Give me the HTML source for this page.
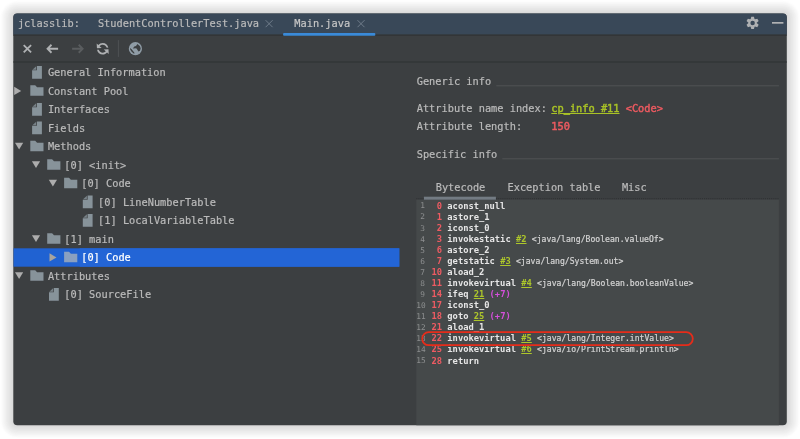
<!DOCTYPE html>
<html><head><meta charset="utf-8"><title>jclasslib</title>
<style>
html,body{margin:0;padding:0;background:#fff;}
body{width:800px;height:439px;position:relative;overflow:hidden;font-family:"DejaVu Sans Mono","Liberation Mono",monospace;font-size:10.3px;color:#bbbbbb;-webkit-text-stroke:0.2px currentColor;}
#layer{will-change:transform;position:absolute;left:0;top:0;width:800px;height:439px;overflow:hidden;}
svg{position:absolute;left:0;top:0;}
.t{position:absolute;white-space:pre;line-height:21.6px;height:21.6px;top:12.7px;}
.row{position:absolute;height:18.5px;line-height:18.5px;white-space:pre;}
.sel{color:#fff;}
.lab{position:absolute;white-space:pre;line-height:14px;height:14px;}
.ln{position:absolute;left:416.3px;width:8.6px;text-align:right;font-size:7.8px;line-height:11px;height:11px;color:#8c8e8f;-webkit-text-stroke:0;}
.cl{position:absolute;left:431.5px;white-space:pre;font-size:8.77px;line-height:11px;height:11px;color:#d6d6d6;-webkit-text-stroke:0;}
.cl b{font-weight:bold;color:#e6e6e6;}
.o{color:#ee5b62;font-weight:bold;}
.l{color:#adc62b;font-weight:bold;text-decoration:underline;}
.d{color:#d4d4d4;font-size:8.12px;-webkit-text-stroke:0.2px #d4d4d4;}
.m{color:#d64fdc;font-weight:bold;}
</style></head><body>
<div id="layer">
<svg width="800" height="439" viewBox="0 0 800 439">
 <defs><clipPath id="wc"><rect x="13.3" y="13.4" width="773.5" height="411.9" rx="4" ry="4"/></clipPath></defs>
 <rect x="-0.7" y="-0.6" width="801.5" height="439.9" rx="18" ry="18" fill="rgb(255,255,255)"/>
<rect x="0.3" y="0.4" width="799.5" height="437.9" rx="17" ry="17" fill="rgb(254,254,254)"/>
<rect x="1.3" y="1.4" width="797.5" height="435.9" rx="16" ry="16" fill="rgb(251,251,251)"/>
<rect x="2.3" y="2.4" width="795.5" height="433.9" rx="15" ry="15" fill="rgb(248,248,248)"/>
<rect x="3.3" y="3.4" width="793.5" height="431.9" rx="14" ry="14" fill="rgb(245,245,245)"/>
<rect x="4.3" y="4.4" width="791.5" height="429.9" rx="13" ry="13" fill="rgb(242,242,242)"/>
<rect x="5.3" y="5.4" width="789.5" height="427.9" rx="12" ry="12" fill="rgb(239,239,239)"/>
<rect x="6.3" y="6.4" width="787.5" height="425.9" rx="11" ry="11" fill="rgb(236,236,236)"/>
<rect x="7.3" y="7.4" width="785.5" height="423.9" rx="10" ry="10" fill="rgb(233,233,233)"/>
<rect x="8.3" y="8.4" width="783.5" height="421.9" rx="9" ry="9" fill="rgb(230,230,230)"/>
<rect x="9.3" y="9.4" width="781.5" height="419.9" rx="8" ry="8" fill="rgb(227,227,227)"/>
<rect x="10.3" y="10.4" width="779.5" height="417.9" rx="7" ry="7" fill="rgb(224,224,224)"/>
<rect x="11.3" y="11.4" width="777.5" height="415.9" rx="6" ry="6" fill="rgb(221,221,221)"/>
<rect x="12.3" y="12.4" width="775.5" height="413.9" rx="5" ry="5" fill="rgb(218,218,218)"/>
 <g clip-path="url(#wc)">
 <rect x="0" y="0" width="800" height="439" fill="#3c3f41"/>
 <rect x="0" y="0" width="800" height="34.6" fill="#394858"/>
 <rect x="0" y="34.6" width="800" height="1.1" fill="#2f3234"/>
 <rect x="0" y="61.4" width="800" height="1.2" fill="#313436"/>
 <rect x="283.1" y="33.1" width="92.2" height="2.6" rx="0.8" fill="#3a8ad8"/>
 
 <rect x="416.3" y="199.6" width="362.6" height="240" fill="#45494a"/>
 <path d="M416.3,198.7 H778.9" stroke="#2e3032" stroke-width="1" stroke-dasharray="1.05 1.05" fill="none"/>
 <rect x="423.9" y="196.7" width="72" height="3" fill="#737b83"/>
 <rect x="496.3" y="85.3" width="282.6" height="1" fill="#505355"/>
 <rect x="502.3" y="158.3" width="276.6" height="1" fill="#505355"/>
 <rect x="13.3" y="248.3" width="386" height="18.4" fill="#2062d2"/>
<rect x="79.7" y="248.3" width="319.6" height="18.4" fill="#2365d6"/>
 </g>
</svg>
<div class="t" style="left:17.9px">jclasslib:</div>
<div class="t" style="left:97.9px">StudentControllerTest.java</div>
<div class="t" style="left:294.3px;color:#c6c6c6">Main.java</div>
<div class="row" style="top:63.2px;left:47.9px">General Information</div>
<div class="row" style="top:81.7px;left:47.9px">Constant Pool</div>
<div class="row" style="top:100.2px;left:47.9px">Interfaces</div>
<div class="row" style="top:118.7px;left:47.9px">Fields</div>
<div class="row" style="top:137.2px;left:47.9px">Methods</div>
<div class="row" style="top:155.7px;left:64.3px">[0] &lt;init&gt;</div>
<div class="row" style="top:174.2px;left:81.2px">[0] Code</div>
<div class="row" style="top:192.7px;left:98.1px">[0] LineNumberTable</div>
<div class="row" style="top:211.2px;left:98.1px">[1] LocalVariableTable</div>
<div class="row" style="top:229.7px;left:64.3px">[1] main</div>
<div class="row sel" style="top:248.2px;left:81.2px">[0] Code</div>
<div class="row" style="top:266.7px;left:47.9px">Attributes</div>
<div class="row" style="top:285.2px;left:64.3px">[0] SourceFile</div>
<div class="lab" style="left:416.7px;top:74px">Generic info</div>
<div class="lab" style="left:416.7px;top:100.5px">Attribute name index:</div>
<div class="lab" style="left:551.3px;top:100.5px"><span style="color:#a9c226;text-decoration:underline;-webkit-text-stroke:0.45px #a9c226">cp_info #11</span> <span style="color:#ec5a60;-webkit-text-stroke:0.45px #ec5a60">&lt;Code&gt;</span></div>
<div class="lab" style="left:416.7px;top:119px">Attribute length:</div>
<div class="lab" style="left:551.3px;top:119px;color:#ec5a60;-webkit-text-stroke:0.5px #ec5a60">150</div>
<div class="lab" style="left:416.7px;top:147px">Specific info</div>
<div class="lab" style="left:435.7px;top:179.8px">Bytecode</div>
<div class="lab" style="left:507.5px;top:179.8px">Exception table</div>
<div class="lab" style="left:621.9px;top:179.8px">Misc</div>
<div class="ln" style="top:200.4px">1</div><div class="cl" style="top:200.8px"><span class="o"> 0</span> <b>aconst_null</b></div>
<div class="ln" style="top:211.45px">2</div><div class="cl" style="top:211.85px"><span class="o"> 1</span> <b>astore_1</b></div>
<div class="ln" style="top:222.5px">3</div><div class="cl" style="top:222.9px"><span class="o"> 2</span> <b>iconst_0</b></div>
<div class="ln" style="top:233.55px">4</div><div class="cl" style="top:233.95px"><span class="o"> 3</span> <b>invokestatic</b> <span class="l">#2</span> <span class="d">&lt;java/lang/Boolean.valueOf&gt;</span></div>
<div class="ln" style="top:244.6px">5</div><div class="cl" style="top:245px"><span class="o"> 6</span> <b>astore_2</b></div>
<div class="ln" style="top:255.65px">6</div><div class="cl" style="top:256.05px"><span class="o"> 7</span> <b>getstatic</b> <span class="l">#3</span> <span class="d">&lt;java/lang/System.out&gt;</span></div>
<div class="ln" style="top:266.7px">7</div><div class="cl" style="top:267.1px"><span class="o">10</span> <b>aload_2</b></div>
<div class="ln" style="top:277.75px">8</div><div class="cl" style="top:278.15px"><span class="o">11</span> <b>invokevirtual</b> <span class="l">#4</span> <span class="d">&lt;java/lang/Boolean.booleanValue&gt;</span></div>
<div class="ln" style="top:288.8px">9</div><div class="cl" style="top:289.2px"><span class="o">14</span> <b>ifeq</b> <span class="l">21</span> <span class="m">(+7)</span></div>
<div class="ln" style="top:299.85px">10</div><div class="cl" style="top:300.25px"><span class="o">17</span> <b>iconst_0</b></div>
<div class="ln" style="top:310.9px">11</div><div class="cl" style="top:311.3px"><span class="o">18</span> <b>goto</b> <span class="l">25</span> <span class="m">(+7)</span></div>
<div class="ln" style="top:321.95px">12</div><div class="cl" style="top:322.35px"><span class="o">21</span> <b>aload_1</b></div>
<div class="ln" style="top:333px">13</div><div class="cl" style="top:333.4px"><span class="o">22</span> <b>invokevirtual</b> <span class="l">#5</span> <span class="d">&lt;java/lang/Integer.intValue&gt;</span></div>
<div class="ln" style="top:344.05px">14</div><div class="cl" style="top:344.45px"><span class="o">25</span> <b>invokevirtual</b> <span class="l">#6</span> <span class="d">&lt;java/io/PrintStream.println&gt;</span></div>
<div class="ln" style="top:355.1px">15</div><div class="cl" style="top:355.5px"><span class="o">28</span> <b>return</b></div>
<svg width="800" height="439" viewBox="0 0 800 439">
<g clip-path="url(#wc)">
<path d="M36.9,65.9 h5 v12.9 h-9.8 v-8.5 h4.8 z" fill="#87939a"/><path d="M36.2,66.2 v3.5 h-3.8 z" fill="#87939a" opacity=".8"/>
<path d="M14.2,86.85 v8.2 l7,-4.1 z" fill="#adadad"/>
<path d="M30.3,85.25 h4.9 l1.9,2 h6.4 v8.6 h-13.2 z" fill="#87939a"/>
<path d="M36.9,102.9 h5 v12.9 h-9.8 v-8.5 h4.8 z" fill="#87939a"/><path d="M36.2,103.2 v3.5 h-3.8 z" fill="#87939a" opacity=".8"/>
<path d="M36.9,121.4 h5 v12.9 h-9.8 v-8.5 h4.8 z" fill="#87939a"/><path d="M36.2,121.7 v3.5 h-3.8 z" fill="#87939a" opacity=".8"/>
<path d="M15,142.85 h8.2 l-4.1,6.7 z" fill="#adadad"/>
<path d="M30.3,140.75 h4.9 l1.9,2 h6.4 v8.6 h-13.2 z" fill="#87939a"/>
<path d="M31.9,161.35 h8.2 l-4.1,6.7 z" fill="#adadad"/>
<path d="M47.2,159.25 h4.9 l1.9,2 h6.4 v8.6 h-13.2 z" fill="#87939a"/>
<path d="M48.8,179.85 h8.2 l-4.1,6.7 z" fill="#adadad"/>
<path d="M64.1,177.75 h4.9 l1.9,2 h6.4 v8.6 h-13.2 z" fill="#87939a"/>
<path d="M87.6,195.4 h5 v12.9 h-9.8 v-8.5 h4.8 z" fill="#87939a"/><path d="M86.9,195.7 v3.5 h-3.8 z" fill="#87939a" opacity=".8"/>
<path d="M87.6,213.9 h5 v12.9 h-9.8 v-8.5 h4.8 z" fill="#87939a"/><path d="M86.9,214.2 v3.5 h-3.8 z" fill="#87939a" opacity=".8"/>
<path d="M31.9,235.35 h8.2 l-4.1,6.7 z" fill="#adadad"/>
<path d="M47.2,233.25 h4.9 l1.9,2 h6.4 v8.6 h-13.2 z" fill="#87939a"/>
<path d="M49.5,253.35 v8.2 l7,-4.1 z" fill="#a8a49e"/>
<path d="M64.1,251.75 h4.9 l1.9,2 h6.4 v8.6 h-13.2 z" fill="#8aa0c0"/>
<path d="M15,272.35 h8.2 l-4.1,6.7 z" fill="#adadad"/>
<path d="M30.3,270.25 h4.9 l1.9,2 h6.4 v8.6 h-13.2 z" fill="#87939a"/>
<path d="M53.8,287.9 h5 v12.9 h-9.8 v-8.5 h4.8 z" fill="#87939a"/><path d="M53.1,288.2 v3.5 h-3.8 z" fill="#87939a" opacity=".8"/>
<g transform="translate(13.3,13.3)">
 <!-- toolbar icons -->
 <g stroke="#afb1b3" stroke-width="1.8" fill="none">
  <path d="M10.4,31.75 l7.4,7.4 M17.8,31.75 l-7.4,7.4"/>
  <path d="M34.2,35.45 h10.6 M38.2,31.45 l-4,4 l4,4"/>
 </g>
 <g stroke="#5a5d5f" stroke-width="1.8" fill="none">
  <path d="M58.8,35.45 h10.6 M65.4,31.45 l4,4 l-4,4"/>
 </g>
 <g transform="translate(89.4,35.45) scale(0.955) translate(-8,-8)">
 <path fill="#afb1b3" d="M12.5747152,11.8852806 C11.4741474,13.1817355 9.83247882,14.0044386 7.99865879,14.0044386 C5.03907292,14.0044386 2.57997332,11.8615894 2.08820756,9.0427473 L3.94774327,9.10768372 C4.43372186,10.8898575 6.06393114,12.2000519 8.00015362,12.2000519 C9.30149237,12.2000519 10.4645985,11.6082097 11.2349873,10.6790094 L9.05000019,8.71167959 L14.0431479,8.44999981 L14.3048222,13.4430431 L12.5747152,11.8852806 Z M3.42785637,4.11741586 C4.52839138,2.82452748 6.16775464,2.00443857 7.99865879,2.00443857 C10.918604,2.00443857 13.3513802,4.09026967 13.8882946,6.8532307 L12.0226389,6.78808057 C11.5024872,5.05935553 9.89838095,3.8000774 8.00015362,3.8000774 C6.69867367,3.8000774 5.53545628,4.39204806 4.76506921,5.32142241 L6.95482203,7.29304326 L1.96167436,7.55472304 L1.70000005,2.56167973 L3.42785637,4.11741586 Z"/>
 </g>
 <rect x="104.6" y="26.8" width="0.9" height="16.8" fill="#515456"/>
 <circle cx="122.1" cy="35.35" r="6.6" fill="#8f9ca6"/>
 <path d="M124.1,30.7 L126.5,32.8 L127.4,35 L126.7,37.4 L125.05,38.1 L123.9,36.2 L122.9,35 L119.55,35.2 L121,33.3 L122.7,32.8 Z M116.7,34.75 L118.35,35.95 L121.5,40 L120.3,40.25 L117.9,37.85 L116.8,35.95 Z" fill="#3c3f41"/>
 <!-- gear + minimise -->
 <g transform="translate(739.3,9.6)">
  <g fill="#afb1b3">
   <path d="M-2,-3.3 L-1.35,-6.2 H1.35 L2,-3.3 Z"/>
   <path d="M-2,-3.3 L-1.35,-6.2 H1.35 L2,-3.3 Z" transform="rotate(60)"/>
   <path d="M-2,-3.3 L-1.35,-6.2 H1.35 L2,-3.3 Z" transform="rotate(120)"/>
   <path d="M-2,-3.3 L-1.35,-6.2 H1.35 L2,-3.3 Z" transform="rotate(180)"/>
   <path d="M-2,-3.3 L-1.35,-6.2 H1.35 L2,-3.3 Z" transform="rotate(240)"/>
   <path d="M-2,-3.3 L-1.35,-6.2 H1.35 L2,-3.3 Z" transform="rotate(300)"/>
   <circle r="4.05"/>
  </g>
  <circle r="2.25" fill="#394858"/>
 </g>
 <rect x="758.7" y="8.7" width="11.4" height="1.7" fill="#afb1b3"/>
 <!-- tab close x -->
 <g stroke="#6f7c8a" stroke-width="1" fill="none">
  <path d="M252.3,6.9 l7,7 M259.3,6.9 l-7,7"/>
  <path d="M344.2,6.9 l7,7 M351.2,6.9 l-7,7"/>
 </g>
 <!-- red annotation -->
 <rect x="408.9" y="318.9" width="270.6" height="13" rx="6.5" ry="6.5" fill="none" stroke="#e62c1a" stroke-width="1.8"/>
</g>
</g>
</svg>
</div>
</body></html>
